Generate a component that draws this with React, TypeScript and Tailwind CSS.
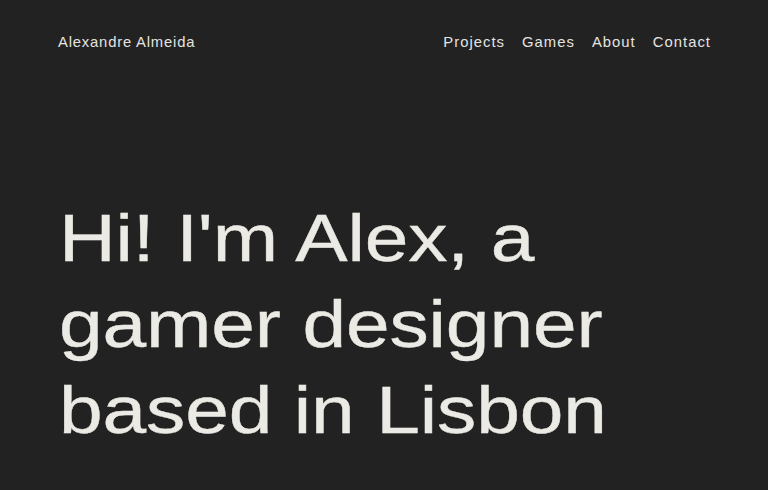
export default function App() {
  const nav = ["Projects", "Games", "About", "Contact"];

  return (
    <div className="min-h-screen w-full bg-[#222222] font-['Liberation_Sans',Arial,sans-serif] text-[#ebeae4] overflow-hidden">
      <header className="flex items-center justify-between px-[58px] pt-[32px]">
        <p className="text-[14.8px] leading-[20px] tracking-[0.055em] text-[#e4e4e1]">
          Alexandre Almeida
        </p>
        <nav className="mr-[-1px] flex items-center gap-[17px]">
          {nav.map((item) => (
            <a
              key={item}
              href="#"
              className="text-[14.8px] leading-[20px] tracking-[0.07em] text-[#e4e4e1]"
            >
              {item}
            </a>
          ))}
        </nav>
      </header>

      <section className="px-[59px] pt-[143px]">
        <h1 className="origin-left scale-x-[1.172] text-[67px] font-normal leading-[86px] tracking-[-0.002em] whitespace-nowrap [-webkit-text-stroke:0.4px_#ebeae4]">
          Hi! I'm Alex, a
          <br />
          gamer designer
          <br />
          based in Lisbon
        </h1>
      </section>
    </div>
  );
}
